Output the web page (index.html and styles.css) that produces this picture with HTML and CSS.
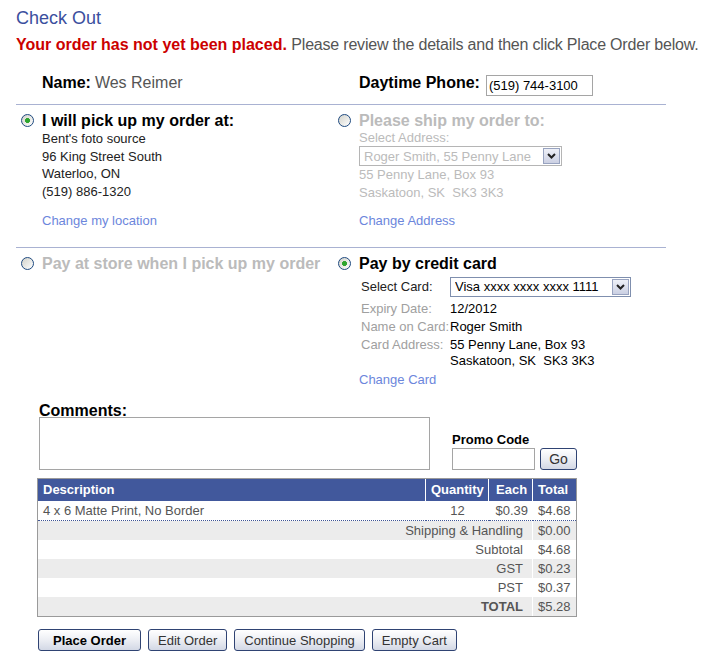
FILE: index.html
```html
<!DOCTYPE html>
<html lang="en">
<head>
  <meta charset="UTF-8">
  <title>Check Out</title>
  <link rel="stylesheet" href="styles.css">
</head>
<body>
  <h1 class="title">Check Out</h1>
  <p class="notice"><strong>Your order has not yet been placed.</strong> <span class="notice-text">Please review the details and then click Place Order below.</span></p>

  <div class="checkout">
    <!-- Contact -->
    <div class="row contact">
      <div class="cell"><b class="name-label">Name:</b><span>Wes Reimer</span></div>
      <div class="cell"><b>Daytime Phone:</b><input type="text" class="text-input phone" value="(519) 744-3100"></div>
    </div>

    <!-- Pickup / shipping -->
    <div class="row delivery">
      <div class="option">
        <input type="radio" class="radio" name="delivery" checked>
        <div class="option-body">
          <h3>I will pick up my order at:</h3>
          <div class="address">Bent's foto source<br>96 King Street South<br>Waterloo, ON<br>(519) 886-1320</div>
          <a class="link" href="#">Change my location</a>
        </div>
      </div>
      <div class="option is-disabled">
        <input type="radio" class="radio" name="delivery">
        <div class="option-body">
          <h3>Please ship my order to:</h3>
          <div class="field-label">Select Address:</div>
          <span class="select address-select is-disabled">
            <select disabled><option>Roger Smith, 55 Penny Lane</option></select>
            <span class="select-arrow"><svg width="9" height="6" viewBox="0 0 9 6"><path d="M1 1l3.5 3.5L8 1" fill="none" stroke="#222" stroke-width="2"/></svg></span>
          </span>
          <div class="ship-lines">55 Penny Lane, Box 93<br>Saskatoon, SK&nbsp; SK3 3K3</div>
          <a class="link link-ship" href="#">Change Address</a>
        </div>
      </div>
    </div>

    <!-- Payment -->
    <div class="row payment">
      <div class="option is-disabled">
        <input type="radio" class="radio" name="payment">
        <div class="option-body">
          <h3>Pay at store when I pick up my order</h3>
        </div>
      </div>
      <div class="option">
        <input type="radio" class="radio" name="payment" checked>
        <div class="option-body">
          <h3>Pay by credit card</h3>
          <table class="card-info">
            <tr class="select-row">
              <td class="label">Select Card:</td>
              <td>
                <span class="select card-select">
                  <select><option>Visa xxxx xxxx xxxx 1111</option></select>
                  <span class="select-arrow"><svg width="9" height="6" viewBox="0 0 9 6"><path d="M1 1l3.5 3.5L8 1" fill="none" stroke="#222" stroke-width="2"/></svg></span>
                </span>
              </td>
            </tr>
            <tr><td class="label">Expiry Date:</td><td>12/2012</td></tr>
            <tr><td class="label">Name on Card:</td><td>Roger Smith</td></tr>
            <tr><td class="label">Card Address:</td><td>55 Penny Lane, Box 93<br>Saskatoon, SK&nbsp; SK3 3K3</td></tr>
          </table>
          <a class="link link-card" href="#">Change Card</a>
        </div>
      </div>
    </div>

    <!-- Comments and promo -->
    <div class="extras">
      <div class="comments">
        <div class="comments-label">Comments:</div>
        <textarea></textarea>
      </div>
      <div class="promo">
        <div class="promo-label">Promo Code</div>
        <div class="promo-row">
          <input type="text" class="text-input promo-input">
          <button class="btn btn-go">Go</button>
        </div>
      </div>
    </div>

    <!-- Cart -->
    <table class="cart">
      <colgroup>
        <col style="width: 388px">
        <col style="width: 63px">
        <col style="width: 44px">
        <col style="width: 43px">
      </colgroup>
      <tr>
        <th>Description</th>
        <th>Quantity</th>
        <th class="th-each">Each</th>
        <th>Total</th>
      </tr>
      <tr class="item">
        <td>4 x 6 Matte Print, No Border</td>
        <td class="qty">12</td>
        <td class="each">$0.39</td>
        <td>$4.68</td>
      </tr>
      <tr class="alt"><td class="sum-label" colspan="3">Shipping &amp; Handling</td><td>$0.00</td></tr>
      <tr><td class="sum-label" colspan="3">Subtotal</td><td>$4.68</td></tr>
      <tr class="alt"><td class="sum-label" colspan="3">GST</td><td>$0.23</td></tr>
      <tr><td class="sum-label" colspan="3">PST</td><td>$0.37</td></tr>
      <tr class="alt"><td class="sum-label grand" colspan="3">TOTAL</td><td>$5.28</td></tr>
    </table>

    <div class="actions">
      <button class="btn btn-primary">Place Order</button>
      <button class="btn">Edit Order</button>
      <button class="btn">Continue Shopping</button>
      <button class="btn">Empty Cart</button>
    </div>
  </div>
</body>
</html>
```

FILE: styles.css
```css
* {
  box-sizing: border-box;
}

body {
  margin: 0;
  padding: 8px 0 0 16px;
  font-family: "Liberation Sans", Arial, sans-serif;
  color: #555;
  background-color: #fff;
}

.title {
  margin: 0;
  font-size: 18px;
  line-height: 21px;
  font-weight: normal;
  color: #3b4f9e;
}

.notice {
  margin: 7px 0 0;
  font-size: 16px;
  line-height: 18px;
}

.notice strong {
  color: #cc0000;
}

.notice-text {
  letter-spacing: -0.2px;
}

.checkout {
  width: 650px;
}

.row {
  display: grid;
  grid-template-columns: 317px 333px;
}

/* contact row */
.contact {
  margin-top: 20px;
  padding-bottom: 8px;
  border-bottom: 1px solid #a9b2d2;
  font-size: 16px;
  line-height: 18px;
}

.contact .cell {
  display: flex;
  align-items: flex-start;
  padding-left: 26px;
}

.contact b {
  color: #000;
}

.name-label {
  margin-right: 4px;
}

.text-input {
  margin: 0;
  padding: 0 2px;
  border: 1px solid #a5a5a5;
  font: 13px "Liberation Sans", Arial, sans-serif;
  color: #000;
  background: #fff;
}

.phone {
  width: 107px;
  height: 21px;
  margin: 1px 0 0 6px;
}

/* options */
.delivery {
  padding: 7px 0 17px;
  border-bottom: 1px solid #a9b2d2;
}

.payment {
  padding-top: 7px;
}

.option {
  display: flex;
  gap: 8px;
  padding-left: 5px;
}

.radio {
  appearance: none;
  flex: none;
  width: 13px;
  height: 13px;
  margin: 2px 0 0;
  border: 1px solid #1f4a80;
  border-radius: 50%;
  background: linear-gradient(135deg, #d2d2ca, #fff);
}

.radio:checked {
  background: radial-gradient(circle, #2ea52e 0 2.2px, transparent 2.8px), linear-gradient(135deg, #d2d2ca, #fff);
}

.option h3 {
  margin: 0;
  font-size: 16px;
  line-height: 18px;
  color: #000;
}

.option.is-disabled h3 {
  color: #bbb;
}

.address {
  font-size: 13px;
  line-height: 17.6px;
  color: #222;
}

.link {
  display: block;
  margin-top: 12px;
  font-size: 13px;
  line-height: 18px;
  color: #6c86dc;
  text-decoration: none;
}

.link-ship {
  margin-top: 10px;
}

.link-card {
  margin-top: 1px;
}

.field-label {
  font-size: 13px;
  line-height: 16px;
  color: #bbb;
}

.ship-lines {
  font-size: 13px;
  line-height: 18px;
  color: #bbb;
}

/* select boxes */
.select {
  position: relative;
  display: block;
  height: 20px;
  border: 1px solid #7f8fae;
  background: #fff;
}

.select select {
  appearance: none;
  width: 100%;
  height: 100%;
  margin: 0;
  padding: 0 20px 0 4px;
  border: 0;
  outline: none;
  font: 13px "Liberation Sans", Arial, sans-serif;
  color: #000;
  background: transparent;
}

.select-arrow {
  position: absolute;
  top: 1px;
  right: 1px;
  width: 17px;
  height: 16px;
  display: flex;
  align-items: center;
  justify-content: center;
  border: 1px solid #98a3c0;
  background: linear-gradient(#eef0f7, #cbd0e3);
  pointer-events: none;
}

.select.is-disabled {
  border-color: #b5b5b5;
}

.select.is-disabled select {
  color: #bbb;
  opacity: 1;
}

.address-select {
  width: 203px;
}

.card-select {
  display: inline-block;
  vertical-align: middle;
  width: 181px;
}

/* card details */
.card-info {
  border-collapse: collapse;
  font-size: 13px;
  line-height: 16px;
  color: #000;
}

.card-info td {
  padding: 1px 0;
  vertical-align: top;
}

.card-info .label {
  width: 91px;
  padding-left: 2px;
  color: #a0a0a0;
  white-space: nowrap;
}

.card-info .select-row td {
  height: 27px;
  padding-top: 0;
  padding-bottom: 0;
  vertical-align: middle;
}

.card-info .select-row .label {
  color: #222;
}

/* comments + promo */
.extras {
  display: flex;
  align-items: flex-end;
  gap: 22px;
  margin-top: 17px;
  padding-left: 23px;
}

.comments-label {
  font-size: 16px;
  line-height: 10px;
  margin-bottom: 1px;
  font-weight: bold;
  color: #000;
}

.comments textarea {
  display: block;
  width: 391px;
  height: 53px;
  margin: 0;
  border: 1px solid #a5a5a5;
  resize: none;
}

.promo-label {
  margin-bottom: 1px;
  font-size: 13px;
  line-height: 15px;
  font-weight: bold;
  color: #000;
}

.promo-row {
  display: flex;
  gap: 5px;
}

.promo-input {
  width: 83px;
  height: 22px;
}

/* cart table */
.cart {
  width: 540px;
  margin: 8px 0 0 21px;
  border: 1px solid #9a9a9a;
  border-collapse: separate;
  border-spacing: 0;
  table-layout: fixed;
  font-size: 13px;
  line-height: 19px;
  color: #555;
}

.cart th {
  height: 22px;
  padding: 0 5px;
  line-height: 22px;
  text-align: left;
  color: #fff;
  background-color: #41589c;
  border-right: 1px solid #fff;
}

.cart .th-each {
  padding-left: 7px;
}

.cart td {
  padding: 0 5px;
  white-space: nowrap;
}

.cart th:last-child {
  border-right: 0;
}

.cart .item td {
  border-bottom: 1px dotted #3f5595;
}

.cart .qty {
  text-align: center;
}

.cart .each {
  text-align: right;
}

.cart .alt td {
  background-color: #ececec;
}

.cart .sum-label {
  padding-right: 9px;
  text-align: right;
  border-right: 1px solid #fff;
}

.cart .grand {
  font-weight: bold;
}

/* buttons */
.actions {
  display: flex;
  gap: 7px;
  margin-top: 12px;
  padding-left: 22px;
}

.btn {
  height: 22px;
  padding: 0 9px;
  border: 1px solid #2f4373;
  border-radius: 3px;
  font: 13px "Liberation Sans", Arial, sans-serif;
  color: #333;
  background: linear-gradient(#fff, #eef0f5 45%, #d3d8e5);
}

.btn-primary {
  padding: 0 14px;
  font-weight: bold;
  color: #000;
}

.btn-go {
  width: 37px;
  padding: 0;
  font-size: 14px;
}
```
